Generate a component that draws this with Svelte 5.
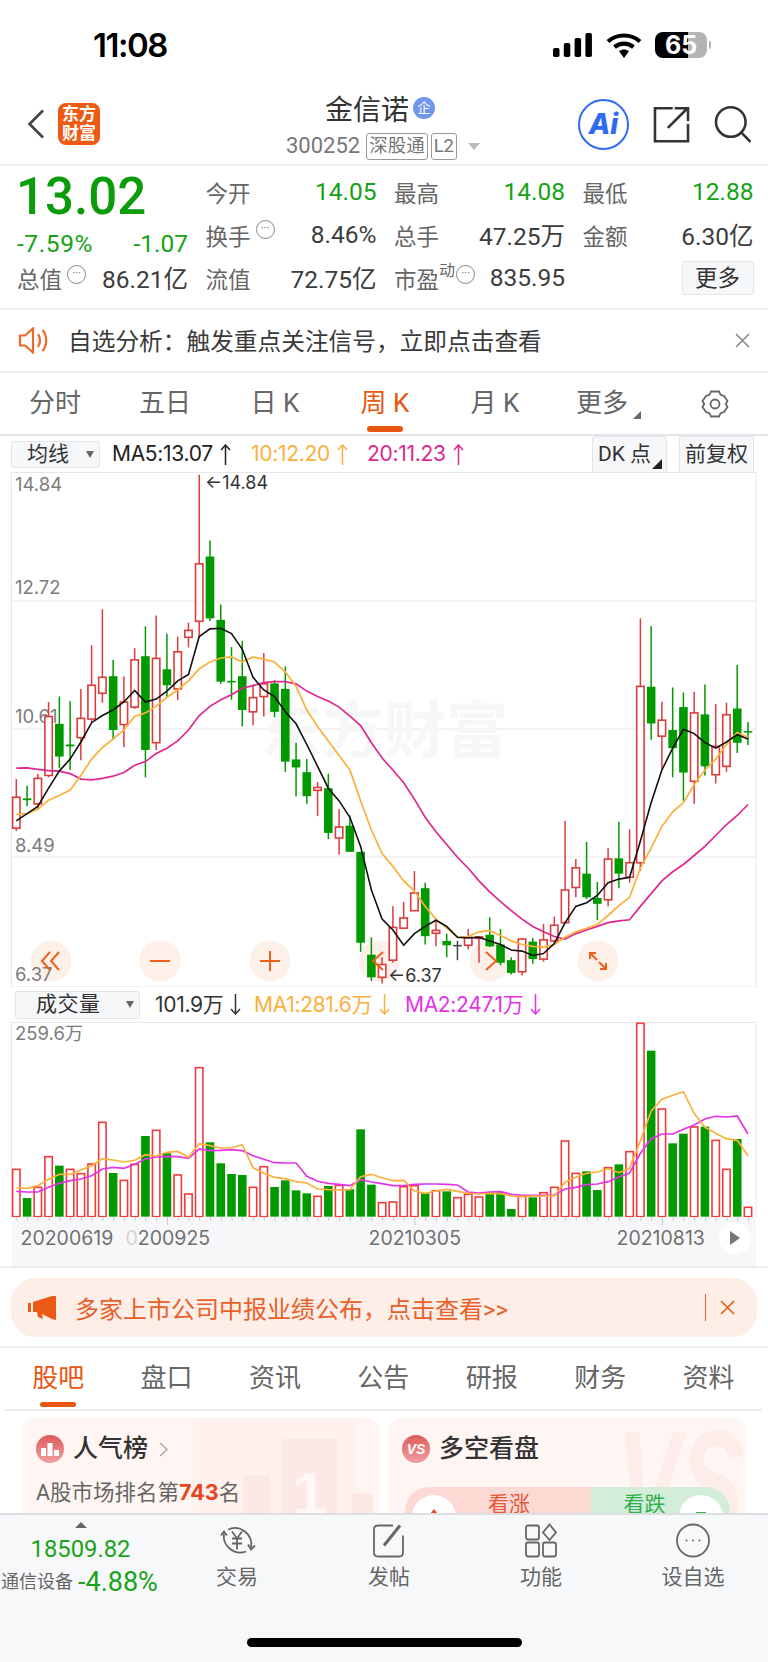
<script>
  // candles as [up, high, top, bottom, low], all y values read off the chart
  const candles = [
    [1,960,1010,1095,1103],[0,978,1013,1018,1035],[1,945,958,1028,1045],[1,748,788,950,955],[0,733,808,898,930],
    [0,745,865,870,935],[1,712,793,846,908],[1,592,702,795,805],[1,493,680,724,750],[0,632,677,825,850],
    [1,678,748,810,872],[1,600,632,762,767],[0,540,622,880,955],[1,510,628,860,880],[0,560,658,702,735],
    [1,568,610,712,742],[1,530,551,570,598],[1,123,368,526,570],[0,304,348,518,525],[0,480,522,692,698],
    [0,597,690,694,742],[0,580,677,770,815],[1,700,736,775,812],[1,613,698,733,788],[0,688,697,775,790],
    [0,650,712,912,940],[0,860,906,928,1008],[0,905,941,1007,1028],[1,968,983,991,1062],[0,945,985,1108,1125],
    [1,1042,1092,1122,1168],[0,1060,1088,1160,1160],[0,1160,1160,1410,1435],[0,1395,1443,1505,1515],[1,1450,1470,1505,1522],
    [1,1310,1368,1458,1465],[1,1298,1342,1370,1372],[1,1213,1273,1322,1322],[0,1245,1260,1392,1415],[1,1345,1376,1384,1420],
    [0,1385,1405,1417,1450],[2,1405,1416,1418,1458],[1,1372,1395,1417,1428],[1,1394,1394,1398,1465],[0,1340,1388,1420,1422],
    [0,1372,1415,1465,1472],[0,1450,1458,1493,1497],[1,1398,1400,1490,1500],[0,1397,1407,1455,1468],[1,1358,1402,1455,1462],
    [1,1338,1362,1405,1410],[1,1075,1265,1355,1355],[1,1180,1204,1258,1285],[0,1133,1220,1285,1290],[0,1243,1287,1303,1348],
    [1,1150,1180,1292,1310],[0,1077,1178,1220,1260],[1,1098,1190,1230,1245],[1,518,705,1190,1213],[0,540,706,807,852],
    [1,747,798,842,935],[0,708,825,875,955],[0,722,762,942,1020],[1,720,778,966,1028],[0,700,782,925,950],
    [1,754,870,948,972],[1,750,783,925,940],[0,646,766,860,888],[0,803,828,832,866]
  ];
  const ma5 = [1075,1055,1035,985,938,905,858,805,785,770,748,716,748,740,718,690,672,568,547,545,560,603,680,715,733,775,808,865,925,985,1020,1065,1145,1265,1345,1375,1417,1385,1365,1348,1365,1395,1397,1395,1405,1415,1430,1433,1445,1440,1412,1355,1310,1300,1280,1245,1235,1230,1130,1025,935,875,823,835,860,875,858,838,850];
  const ma10 = [1057,1055,1043,1018,1005,990,950,905,873,850,825,788,778,760,735,715,690,657,638,627,624,638,624,630,638,665,705,770,815,855,895,935,1020,1100,1165,1200,1240,1268,1310,1345,1370,1395,1393,1380,1377,1390,1405,1415,1420,1422,1415,1395,1380,1370,1360,1335,1308,1285,1205,1150,1090,1050,1025,975,935,905,865,832,845];
  const ma20 = [930,929,933,937,938,945,960,962,958,952,942,922,912,890,875,855,825,785,760,742,728,710,703,695,692,692,698,718,733,745,762,787,813,860,902,935,970,1015,1065,1105,1140,1175,1205,1240,1270,1297,1322,1345,1365,1380,1393,1400,1385,1375,1365,1355,1350,1347,1310,1275,1240,1215,1195,1170,1145,1115,1085,1060,1030];

  // volume: bar top per candle, up/down comes from this list
  const volume = [
    [1,538],[0,624],[1,592],[1,500],[0,527],[1,538],[1,551],[1,522],[1,397],[0,549],[1,571],[1,523],[0,438],[1,421],[0,490],[1,555],[1,612],[1,233],[0,457],[0,520],[0,552],[0,555],[1,592],[1,530],[0,591],[0,571],[0,601],[0,610],[1,619],[0,588],[1,586],[0,598],[0,418],[0,584],[1,638],[1,636],[1,590],[1,587],[0,610],[1,602],[0,604],[1,623],[1,613],[1,621],[0,606],[0,606],[0,657],[1,619],[0,622],[1,608],[1,592],[1,453],[1,550],[0,544],[0,600],[1,533],[0,523],[1,485],[1,100],[0,182],[1,357],[0,460],[0,431],[1,411],[0,410],[1,451],[1,538],[0,447],[1,652]
  ];
  const volMa1 = [594,595,587,568,553,553,540,527,506,510,516,511,494,498,487,484,502,461,467,474,474,464,533,550,562,566,575,579,597,599,600,599,560,553,563,572,571,603,610,603,598,604,610,612,610,611,618,620,618,618,617,577,562,550,546,536,548,535,452,364,328,316,305,370,412,430,446,451,497];
  const volMa2 = [604,606,606,592,580,572,567,557,537,532,535,523,507,501,499,500,505,477,482,481,479,482,497,508,518,519,519,559,574,580,583,587,569,576,581,587,587,583,582,582,583,585,606,609,606,605,613,616,616,616,615,597,592,584,582,575,561,549,490,447,432,432,418,405,387,379,381,378,432];

  const cx = (i) => 16.3 + i * 10.76;
  const py = (z) => z / 2.75 - 42;
  const vy = (z) => z / 3 - 32;
  const line = (arr, fy) => arr.map((z, i) => `${cx(i).toFixed(1)},${fy(z).toFixed(1)}`).join(' ');

  const grids = [129, 257, 385];
  const priceLabels = [['14.84', 19], ['12.72', 122], ['10.61', 251], ['8.49', 380], ['6.37', 509]];
  const colors = { 0: '#009a00', 1: '#dc3c3c', 2: '#444' };

  // zoom / scroll buttons along the bottom of the price chart
  const tools = [
    { x: 51, d: 'M10 2 2 11l8 9M19 2l-8 9 8 9' },
    { x: 160, d: 'M1 11H21' },
    { x: 270, d: 'M1 11H21M11 1V21' },
    { x: 379, d: 'M15 2 5 11l10 9' },
    { x: 490, d: 'M7 2l10 9-10 9' },
    { x: 598, d: 'M3 3 10 10M3 9V3H9M19 19 12 12M19 13V19H13' }
  ];

  const rows = [
    [['今开', '14.05', 'up'], ['最高', '14.08', 'up'], ['最低', '12.88', 'up']],
    [['换手', '8.46%', '', 'info'], ['总手', '47.25万', ''], ['金额', '6.30亿', '']]
  ];
  const chartTabs = ['分时', '五日', '日 K', '周 K', '月 K'];
  const newsTabs = ['股吧', '盘口', '资讯', '公告', '研报', '财务', '资料'];
</script>

{#snippet arrow(up)}
  <svg class="arrow" width="11" height="21" viewBox="0 0 11 21" fill="none" stroke="currentColor" stroke-width="1.500">
    {#if up}
      <path d="M5.500 1V21M1 6 5.500 1 10 6" />
    {:else}
      <path d="M5.500 0V20M1 15 5.500 20 10 15" />
    {/if}
  </svg>
{/snippet}

<div class="page">
  <div class="status">
    <span class="time">11:08</span>
    <div class="status-icons">
      <svg width="40" height="24" viewBox="0 0 40 24">
        <rect x="0" y="15" width="6.5" height="9" rx="1.8" />
        <rect x="10.8" y="10" width="6.5" height="14" rx="1.8" />
        <rect x="21.6" y="5" width="6.5" height="19" rx="1.8" />
        <rect x="32.4" y="0" width="6.5" height="24" rx="1.8" />
      </svg>
      <svg width="36" height="25" viewBox="0 0 36 25">
        <path d="M2 8.5C11 0.5 25 0.5 34 8.5" fill="none" stroke="#000" stroke-width="4.2" />
        <path d="M8.5 14C14 9.5 22 9.5 27.5 14" fill="none" stroke="#000" stroke-width="4.2" />
        <path d="M13 18.2C16 16 20 16 23 18.2L18 25Z" fill="#000" />
      </svg>
      <div class="battery"><span>65</span></div>
      <i class="nub"></i>
    </div>
  </div>

  <header class="top">
    <div class="top-left">
      <svg width="18" height="30" viewBox="0 0 18 30"><path d="M16 1.5 2.5 15 16 28.5" fill="none" stroke="#444" stroke-width="2.6" /></svg>
      <div class="logo">东方<br />财富</div>
    </div>
    <div class="top-mid">
      <div class="name">金信诺<span class="qi">企</span></div>
      <div class="code">
        300252<span class="tag">深股通</span><span class="tag l2">L2</span><i class="down"></i>
      </div>
    </div>
    <div class="top-right">
      <div class="ai">Ai</div>
      <svg width="37" height="37" viewBox="0 0 37 37">
        <path d="M20 2H2V35.5H35.5V18M15 22 35 2M22 2H35.5V15" fill="none" stroke="#333" stroke-width="2.6" />
      </svg>
      <svg width="38" height="38" viewBox="0 0 38 38">
        <circle cx="17" cy="17" r="15" fill="none" stroke="#333" stroke-width="2.6" />
        <path d="M28 28 37 37" stroke="#333" stroke-width="2.6" />
      </svg>
    </div>
  </header>

  <section class="stats">
    <div class="price">13.02</div>
    {#each rows[0] as r}
      <div class="cell"><span class="lb">{r[0]}</span><span class={r[2]}>{r[1]}</span></div>
    {/each}
    <div class="change"><span class="pct">-7.59%</span><span>-1.07</span></div>
    {#each rows[1] as r}
      <div class="cell">
        <span class="lb">{r[0]}{#if r[3]}<i class="dots up-dots">···</i>{/if}</span><span class="val">{r[1]}</span>
      </div>
    {/each}
    <div class="cell"><span class="lb">总值<i class="dots">···</i></span><span class="val">86.21亿</span></div>
    <div class="cell"><span class="lb">流值</span><span class="val">72.75亿</span></div>
    <div class="cell"><span class="lb">市盈<sup>动</sup><i class="dots tight">···</i></span><span class="val">835.95</span></div>
    <div class="cell end"><button class="more">更多</button></div>
  </section>

  <div class="notice">
    <svg width="31" height="27" viewBox="0 0 31 27" fill="none" stroke="#ef6a28" stroke-width="2.2">
      <path d="M2 8.5H7L15 1.5V25.5L7 18.5H2Z" />
      <path d="M20 7C22.5 11 22.5 16 20 20M24.5 3C29.5 9 29.5 18 24.5 24" />
    </svg>
    <span class="notice-text">自选分析：触发重点关注信号，立即点击查看</span>
    <svg width="15" height="15" viewBox="0 0 15 15"><path d="M1 1 14 14M14 1 1 14" stroke="#888" stroke-width="1.6" /></svg>
  </div>

  <nav class="chart-tabs">
    {#each chartTabs as t}
      <div class="ctab" class:on={t === '周 K'}>{t}</div>
    {/each}
    <div class="ctab more-tab">更多<i class="corner"></i></div>
    <div class="ctab">
      <svg width="30" height="30" viewBox="0 0 30 30" fill="none" stroke="#666" stroke-width="1.8">
        <path d="M11 2.5H19L20.5 5.8 24 7 27.5 12 25.8 15 27.5 18 24 23 20.5 24.2 19 27.5H11L9.500 24.200 6 23 2.500 18 4.200 15 2.500 12 6 7 9.500 5.800Z" />
        <circle cx="15" cy="15" r="4.500" />
      </svg>
    </div>
  </nav>

  <div class="legend">
    <div class="pick">均线<i class="tri"></i></div>
    <span class="ma w1 k">MA5:13.07{@render arrow(true)}</span>
    <span class="ma w2 o">10:12.20{@render arrow(true)}</span>
    <span class="ma w3 p">20:11.23{@render arrow(true)}</span>
    <div class="opt dk">DK 点<i class="corner dark"></i></div>
    <div class="opt">前复权</div>
  </div>

  <svg class="plot" width="768" height="515">
    <rect x="11.500" y="0.500" width="744.500" height="514.500" fill="#fff" stroke="#e6e7ec" />
    {#each grids as g}
      <line x1="12" x2="756" y1={g} y2={g} stroke="#e9eaf0" stroke-width="1.2" />
    {/each}
    <text class="wm" x="384" y="281" text-anchor="middle">东方财富</text>
    {#each tools as t}
      <circle cx={t.x} cy="489" r="20.500" fill="#fdf0e9" />
    {/each}
    {#each priceLabels as l}
      <text class="axis" x="15" y={l[1]}>{l[0]}</text>
    {/each}
    {#each candles as c, i}
      {#if c[0] === 1}
        <line x1={cx(i)} x2={cx(i)} y1={py(c[1])} y2={py(c[2])} stroke={colors[1]} stroke-width="1.500" />
        <line x1={cx(i)} x2={cx(i)} y1={py(c[3])} y2={py(c[4])} stroke={colors[1]} stroke-width="1.500" />
        <rect x={cx(i) - 3.700} y={py(c[2])} width="7.400" height={py(c[3]) - py(c[2])} fill="#fff" stroke={colors[1]} stroke-width="1.600" />
      {:else}
        <line x1={cx(i)} x2={cx(i)} y1={py(c[1])} y2={py(c[4])} stroke={colors[c[0]]} stroke-width="1.500" />
        <rect x={cx(i) - 4.300} y={py(c[2])} width="8.600" height={Math.max(py(c[3]) - py(c[2]), 1.500)} fill={colors[c[0]]} />
      {/if}
    {/each}
    <polyline points={line(ma20, py)} fill="none" stroke="#e0278f" stroke-width="1.700" />
    <polyline points={line(ma10, py)} fill="none" stroke="#fbb03b" stroke-width="1.700" />
    <polyline points={line(ma5, py)} fill="none" stroke="#111" stroke-width="1.600" />
    <text class="mark" x="205" y="17">←14.84</text>
    <text class="mark" x="388" y="510">←6.37</text>
    {#each tools as t}
      <path class="tool" d={t.d} transform="translate({t.x - 11} 478)" />
    {/each}
  </svg>

  <div class="legend vol">
    <div class="pick wide">成交量<i class="tri"></i></div>
    <span class="ma v1">101.9万{@render arrow(false)}</span>
    <span class="ma v2 o">MA1:281.6万{@render arrow(false)}</span>
    <span class="ma v3 m">MA2:247.1万{@render arrow(false)}</span>
  </div>

  <svg class="volchart" width="768" height="195">
    <rect x="11.500" y="0.500" width="744.500" height="195" fill="#fff" stroke="#e6e7ec" />
    <text class="axis" x="15" y="18">259.6万</text>
    {#each volume as v, i}
      {#if v[0]}
        <rect x={cx(i) - 3.700} y={vy(v[1])} width="7.400" height={vy(680) - vy(v[1])} fill="#fff" stroke="#f23a3a" stroke-width="1.600" />
      {:else}
        <rect x={cx(i) - 4.300} y={vy(v[1])} width="8.600" height={vy(680) - vy(v[1])} fill="#009a00" />
      {/if}
    {/each}
    <polyline points={line(volMa2, vy)} fill="none" stroke="#e334e8" stroke-width="1.700" />
    <polyline points={line(volMa1, vy)} fill="none" stroke="#fbb03b" stroke-width="1.700" />
  </svg>

  <div class="axisbar">
    <svg width="745" height="49" viewBox="11.500 0 745 49">
      {#each candles as c, i}
        <line x1={cx(i)} x2={cx(i)} y1="0" y2={i === 14 || i === 37 || i === 60 ? 8 : 4} stroke="#c8c9cf" />
      {/each}
      <text class="date" x="20" y="28">20200619</text>
      <text class="date" x="125" y="28"><tspan opacity="0.25">0</tspan>200925</text>
      <text class="date" x="368" y="28">20210305</text>
      <text class="date" x="616" y="28">20210813</text>
    </svg>
    <div class="play"><i></i></div>
  </div>

  <div class="promo-wrap">
    <div class="promo">
      <svg width="29" height="24" viewBox="0 0 29 24">
        <path d="M0 7H3V16H0ZM5 6 24 0H28V24L24 23 14 18 15 23 10 21 9 16 5 16Z" fill="#ea5a14" />
      </svg>
      <span class="promo-text">多家上市公司中报业绩公布，点击查看&gt;&gt;</span>
      <i class="vbar"></i>
      <svg width="15" height="15" viewBox="0 0 15 15"><path d="M1 1 14 14M14 1 1 14" stroke="#ea5a14" stroke-width="1.600" /></svg>
    </div>
  </div>

  <nav class="news-tabs">
    {#each newsTabs as t, i}
      <div class="ntab" class:on={i === 0}>{t}</div>
    {/each}
  </nav>

  <div class="cards">
    <div class="card">
      <div class="ghost-back"></div>
      <div class="ghost-bars"><b></b><b>1</b><b></b></div>
      <div class="card-title">
        <div class="badge">
          <svg width="18" height="14" viewBox="0 0 18 14" fill="#fff"><rect x="0" y="6" width="5" height="8" /><rect x="6.500" y="1" width="5" height="13" /><rect x="13" y="8" width="5" height="6" /></svg>
        </div>
        人气榜
        <svg class="chev" width="9" height="15" viewBox="0 0 9 15"><path d="M1 1 8 7.500 1 14" fill="none" stroke="#aaa" stroke-width="1.500" /></svg>
      </div>
      <div class="rank">A股市场排名第<b>743</b>名</div>
    </div>
    <div class="card">
      <div class="ghost-vs">VS</div>
      <div class="card-title"><div class="badge vs">VS</div>多空看盘</div>
      <div class="vote">
        <div class="vote-up"><i class="knob"><i class="mini-up"></i></i><span>看涨</span></div>
        <div class="vote-down"><span>看跌</span><i class="knob"><i class="mini-down"></i></i></div>
      </div>
    </div>
  </div>

  <footer class="foot">
    <div class="index">
      <i class="caret"></i>
      <div class="idx-num">18509.82</div>
      <div class="idx-line"><span>通信设备</span><b>-4.88%</b></div>
    </div>
    <div class="act">
      <svg width="38" height="36" viewBox="0 0 38 36" fill="none" stroke="#666" stroke-width="1.800">
        <path d="M10 7A16.500 16.500 0 0 1 33 25M28 29A16.500 16.500 0 0 1 6 11" />
        <path d="M3 13 6 9 9 13M30 22 33 27 37 23" />
        <path d="M14 9 19 16 24 9M19 16V27M14 16H24M14 21H24" />
      </svg>
      <span>交易</span>
    </div>
    <div class="act">
      <svg width="34" height="36" viewBox="0 0 34 36" fill="none" stroke="#666" stroke-width="1.800">
        <path d="M21 3H6Q2 3 2 7V30Q2 34 6 34H27Q31 34 31 30V13" />
        <path d="M12 23 28 3" stroke-width="3" />
      </svg>
      <span>发帖</span>
    </div>
    <div class="act">
      <svg width="32" height="34" viewBox="0 0 32 34" fill="none" stroke="#666" stroke-width="1.800">
        <rect x="1" y="2" width="13" height="14" rx="2" />
        <rect x="1" y="19" width="13" height="14" rx="2" />
        <rect x="18" y="19" width="13" height="14" rx="2" />
        <path d="M24.500 1 31 9 24.500 16.500 18 9Z" />
      </svg>
      <span>功能</span>
    </div>
    <div class="act">
      <svg width="34" height="34" viewBox="0 0 34 34" fill="none" stroke="#666" stroke-width="1.800">
        <circle cx="17" cy="17" r="16" />
        <circle cx="10.500" cy="17" r="1" fill="#666" stroke="none" />
        <circle cx="17" cy="17" r="1" fill="#666" stroke="none" />
        <circle cx="23.500" cy="17" r="1" fill="#666" stroke="none" />
      </svg>
      <span>设自选</span>
    </div>
    <i class="home"></i>
  </footer>
</div>

<style>
  :global(body) {
    margin: 0;
    background: #fff;
  }
  .page {
    width: 768px;
    height: 1662px;
    display: flex;
    flex-direction: column;
    overflow: hidden;
    position: relative;
    color: #333;
    font-family: Roboto, "Noto Sans CJK SC", sans-serif;
  }
  i {
    font-style: normal;
  }

  .status {
    height: 88px;
    flex: none;
    display: flex;
    align-items: flex-start;
    justify-content: space-between;
    padding: 0 57px 0 93px;
    box-sizing: border-box;
  }
  .time {
    margin-top: 27px;
    font: 600 33px/36px Inter, sans-serif;
    color: #000;
    letter-spacing: -1.500px;
  }
  .status-icons {
    display: flex;
    align-items: center;
    gap: 13px;
    margin-top: 32px;
  }
  .status-icons svg {
    fill: #000;
  }
  .battery {
    width: 52px;
    height: 26px;
    border-radius: 8px;
    background: linear-gradient(90deg, #000 63%, #b4b4b4 63%);
    color: #fff;
    font: 700 25px/26px Inter, sans-serif;
    text-align: center;
  }
  .nub {
    width: 2px;
    height: 8px;
    background: #b4b4b4;
    margin-left: -11px;
    border-radius: 0 2px 2px 0;
  }

  .top {
    height: 78px;
    flex: none;
    display: flex;
    align-items: flex-start;
    box-sizing: border-box;
    border-bottom: 2px solid #ecedf0;
  }
  .top-left,
  .top-right {
    width: 180px;
    flex: none;
    display: flex;
    align-items: center;
    height: 72px;
  }
  .top-left {
    padding-left: 27px;
    gap: 13px;
    box-sizing: border-box;
  }
  .logo {
    width: 42px;
    height: 42px;
    border-radius: 8px;
    background: #ef5a13;
    color: #fff;
    font-weight: 700;
    font-size: 17px;
    line-height: 19px;
    text-align: center;
    padding-top: 2px;
    box-sizing: border-box;
  }
  .top-mid {
    flex: 1;
    text-align: center;
  }
  .name {
    font-size: 28px;
    line-height: 40px;
    margin-top: 3px;
    display: flex;
    justify-content: center;
    align-items: center;
    gap: 4px;
    margin-left: -8px;
  }
  .qi {
    width: 22px;
    height: 22px;
    border-radius: 50%;
    background: #6f97ec;
    color: #fff;
    font-size: 13px;
    line-height: 22px;
    margin-top: -6px;
  }
  .code {
    display: flex;
    justify-content: center;
    align-items: center;
    color: #777;
    font-size: 22px;
    line-height: 28px;
    margin-left: -2px;
    margin-top: 1px;
  }
  .tag {
    border: 1px solid #999;
    border-radius: 3px;
    font-size: 18.500px;
    line-height: 25px;
    padding: 0 2px;
    margin-left: 6px;
  }
  .l2 {
    margin-left: 3px;
  }
  .down {
    width: 0;
    height: 0;
    border: 6px solid transparent;
    border-top: 7px solid #bbb;
    border-bottom: 0;
    margin-left: 11px;
  }
  .top-right {
    justify-content: flex-end;
    gap: 24px;
    padding-right: 17px;
    box-sizing: border-box;
    width: 190px;
    margin-left: -10px;
  }
  .ai {
    width: 51px;
    height: 51px;
    box-sizing: border-box;
    flex: none;
    border: 2.600px solid #2f6bf2;
    border-radius: 50%;
    color: #2f6bf2;
    font: italic 800 28px/46px Inter, sans-serif;
    text-align: center;
  }

  .stats {
    height: 144px;
    flex: none;
    box-sizing: border-box;
    padding: 4px 15px 0 17px;
    display: grid;
    grid-template-columns: 171px 171px 171px 171px;
    grid-auto-rows: 43px;
    column-gap: 17.500px;
    border-bottom: 2px solid #ecedf0;
    font-size: 24.500px;
  }
  .price {
    font-size: 51px;
    font-weight: 500;
    line-height: 43px;
    color: #0a9c0a;
    padding-top: 5px;
    margin-left: -1px;
  }
  .change {
    display: flex;
    justify-content: space-between;
    color: #14a314;
    font-size: 24.500px;
    line-height: 43px;
    padding-top: 9px;
  }
  .pct {
    letter-spacing: 0.600px;
  }
  .cell {
    display: flex;
    justify-content: space-between;
    align-items: center;
    white-space: nowrap;
  }
  .lb {
    color: #666;
    font-size: 22.500px;
    display: flex;
    align-items: center;
  }
  .up {
    color: #14a314;
  }
  .val {
    color: #3c3c3c;
  }
  .dots {
    width: 19px;
    height: 19px;
    box-sizing: border-box;
    border: 1px solid #888;
    border-radius: 50%;
    color: #666;
    font-size: 11px;
    line-height: 15px;
    text-align: center;
    margin: -6px 0 0 5px;
  }
  .up-dots {
    margin-top: -10px;
  }
  .tight {
    margin-left: 1px;
  }
  sup {
    font-size: 16px;
    line-height: 16px;
    margin-top: -14px;
  }
  .end {
    justify-content: flex-end;
  }
  .more {
    width: 72px;
    height: 34px;
    border: 1px solid #e4e6ea;
    border-radius: 3px;
    background: #f6f7f9;
    color: #333;
    font-family: inherit;
    font-size: 22.500px;
    line-height: 30px;
    padding: 0;
    margin-top: 1px;
  }

  .notice {
    height: 63px;
    flex: none;
    box-sizing: border-box;
    border-bottom: 2px solid #ecedf0;
    display: flex;
    align-items: center;
    padding: 0 18px;
  }
  .notice-text {
    flex: 1;
    margin-left: 19px;
    margin-top: -2px;
    font-size: 23.700px;
    color: #3a3a3a;
  }

  .chart-tabs {
    height: 63px;
    flex: none;
    box-sizing: border-box;
    border-bottom: 2px solid #e4e5e9;
    display: flex;
  }
  .ctab {
    width: 110px;
    flex: none;
    font-size: 26px;
    line-height: 61px;
    text-align: center;
    color: #666;
    position: relative;
    display: flex;
    align-items: center;
    justify-content: center;
  }
  .ctab.on {
    color: #e8560f;
  }
  .ctab.on::after {
    content: "";
    position: absolute;
    left: 37px;
    width: 36px;
    bottom: 2px;
    height: 6px;
    border-radius: 3px;
    background: #e8560f;
  }
  .more-tab {
    margin-left: -3px;
    margin-right: 3px;
  }
  .corner {
    position: absolute;
    right: 16px;
    bottom: 15px;
    width: 0;
    height: 0;
    border-left: 8px solid transparent;
    border-bottom: 8px solid #666;
  }

  .legend {
    height: 36px;
    flex: none;
    display: flex;
    align-items: center;
    padding-left: 11px;
    box-sizing: border-box;
  }
  .pick {
    width: 89px;
    height: 27px;
    box-sizing: border-box;
    border: 1px solid #e3e5ea;
    border-radius: 3px;
    background: #f6f7f9;
    font-size: 21px;
    line-height: 25px;
    padding-left: 15px;
    position: relative;
    flex: none;
    margin-top: 1px;
  }
  .pick.wide {
    width: 125px;
    margin-left: 4px;
    padding-left: 20px;
    letter-spacing: 0.500px;
    height: 28px;
  }
  .tri {
    position: absolute;
    right: 5px;
    top: 9px;
    width: 0;
    height: 0;
    border: 4px solid transparent;
    border-top: 7px solid #666;
    border-bottom: 0;
  }
  .ma {
    font: 21px/36px Inter, "Noto Sans CJK SC", sans-serif;
    white-space: nowrap;
    flex: none;
    letter-spacing: -0.300px;
    display: flex;
    align-items: center;
  }
  .arrow {
    margin-left: 7px;
    flex: none;
  }
  .w1 {
    margin-left: 12px;
    width: 139px;
  }
  .w2 {
    width: 116px;
  }
  .w3 {
    width: 225px;
  }
  .k {
    color: #222;
  }
  .o {
    color: #fbb03b;
  }
  .p {
    color: #e0278f;
  }
  .m {
    color: #e334e8;
  }
  .opt {
    width: 75px;
    height: 36px;
    box-sizing: border-box;
    flex: none;
    border: 1px solid #e3e5ea;
    border-bottom: 0;
    border-radius: 3px 3px 0 0;
    background: #f6f7f9;
    font-size: 21px;
    line-height: 34px;
    text-align: center;
    margin-left: 12px;
    position: relative;
    color: #333;
  }
  .dk {
    margin-left: 0;
    padding-right: 10px;
    white-space: nowrap;
  }
  .corner.dark {
    right: 4px;
    bottom: 3px;
    border-left-width: 10px;
    border-bottom: 10px solid #222;
  }

  .plot,
  .volchart {
    display: block;
    flex: none;
  }
  .wm {
    font-size: 62px;
    font-weight: 700;
    fill: #f7f7f7;
  }
  .axis {
    font: 18.500px Inter, "Noto Sans CJK SC", sans-serif;
    fill: #7c7c7c;
  }
  .mark {
    font: 400 18px Inter, sans-serif;
    fill: #333;
  }
  .tool {
    fill: none;
    stroke: #ee5f18;
    stroke-width: 2;
  }

  .vol {
    height: 35px;
  }
  .v1 {
    margin-left: 15px;
    width: 99px;
  }
  .v2 {
    width: 151px;
  }
  .v3 {
    width: 160px;
  }

  .axisbar {
    height: 49px;
    flex: none;
    margin: 0 12px 0 11.500px;
    background: #f7f7fa;
    position: relative;
  }
  .date {
    font: 19.500px Inter, sans-serif;
    fill: #707070;
  }
  .play {
    position: absolute;
    right: 5px;
    top: 5px;
    width: 32px;
    height: 32px;
    border-radius: 50%;
    background: #fff;
    display: flex;
    align-items: center;
    justify-content: center;
  }
  .play i {
    width: 0;
    height: 0;
    border: 7px solid transparent;
    border-left: 10px solid #777;
    border-right: 0;
  }

  .promo-wrap {
    height: 82px;
    flex: none;
    box-sizing: border-box;
    border-top: 2px solid #ecedf0;
    border-bottom: 2px solid #ecedf0;
    padding: 10px 11px 0;
  }
  .promo {
    height: 59px;
    border-radius: 24px;
    background: #fdeee8;
    display: flex;
    align-items: center;
    padding: 0 22px 0 17px;
    color: #e8602a;
  }
  .promo-text {
    flex: 1;
    margin-left: 18px;
    font-size: 24px;
  }
  .vbar {
    width: 1px;
    height: 27px;
    background: #e8602a;
    margin-right: 14px;
  }

  .news-tabs {
    height: 63px;
    flex: none;
    box-sizing: border-box;
    margin: 0 6px 0 4px;
    border-bottom: 2px solid #ecedf0;
    display: flex;
  }
  .ntab {
    width: 108.400px;
    flex: none;
    text-align: center;
    font-size: 26px;
    line-height: 61px;
    color: #666;
    position: relative;
  }
  .ntab.on {
    color: #e8560f;
  }
  .ntab.on::after {
    content: "";
    position: absolute;
    left: 36px;
    width: 36px;
    bottom: 2px;
    height: 5px;
    border-radius: 3px;
    background: #e8560f;
  }

  .cards {
    flex: 1;
    min-height: 0;
    overflow: hidden;
    display: flex;
    gap: 8px;
    padding: 7px 22px 0;
  }
  .card {
    width: 358px;
    height: 200px;
    flex: none;
    box-sizing: border-box;
    border-radius: 14px;
    background: #fff6f3;
    padding: 16px 14px;
    position: relative;
    overflow: hidden;
  }
  .card-title {
    display: flex;
    align-items: center;
    font-size: 25px;
    font-weight: 500;
    line-height: 30px;
    color: #333;
    position: relative;
    gap: 9px;
  }
  .badge {
    width: 28px;
    height: 28px;
    border-radius: 50%;
    background: linear-gradient(#dd5a5a, #f0a0a0);
    display: flex;
    align-items: center;
    justify-content: center;
    color: #fff;
    font: italic 700 14px/28px "Liberation Sans", sans-serif;
  }
  .chev {
    margin-left: 2px;
  }
  .rank {
    position: relative;
    margin-top: 13px;
    font-size: 21.500px;
    line-height: 30px;
    color: #666;
  }
  .rank b {
    color: #e8461e;
    font-weight: 700;
    font-family: Inter, sans-serif;
  }
  .ghost-back {
    position: absolute;
    left: 171px;
    top: 0;
    bottom: 0;
    width: 165px;
    background: #fff1ee;
  }
  .ghost-bars {
    position: absolute;
    left: 221px;
    bottom: 0;
    top: 0;
    display: flex;
    align-items: flex-end;
    gap: 12px;
  }
  .ghost-bars b {
    width: 27px;
    height: 143px;
    background: #fce9e6;
  }
  .ghost-bars b:nth-child(2) {
    width: 55px;
    height: 179px;
    color: #fff8f6;
    font: 700 62px/110px "Liberation Sans", sans-serif;
    text-align: center;
  }
  .ghost-bars b:nth-child(3) {
    width: 21px;
    height: 125px;
    margin-left: 3px;
  }
  .ghost-vs {
    position: absolute;
    left: 229px;
    top: -9px;
    font: italic 700 95px/95px "Liberation Sans", sans-serif;
    color: #fdecea;
    transform: scaleY(1.600);
    transform-origin: top left;
  }
  .vote {
    position: relative;
    display: flex;
    height: 60px;
    margin-top: 23px;
    margin-left: 3px;
    width: 325px;
    border-radius: 24px;
    overflow: hidden;
    gap: 2px;
    font-size: 21px;
    line-height: 34px;
  }
  .vote-up {
    flex: 1;
    background: #fdd9d4;
    color: #e8563a;
    padding-left: 83px;
    position: relative;
    clip-path: polygon(0 0, 100% 0, 97% 100%, 0 100%);
  }
  .vote-down {
    flex: 1;
    background: #d2eed8;
    color: #35ae52;
    padding-left: 33px;
    position: relative;
    margin-left: -6px;
  }
  .knob {
    position: absolute;
    top: 8px;
    width: 44px;
    height: 44px;
    border-radius: 50%;
    background: #fff;
  }
  .vote-up .knob {
    left: 7px;
  }
  .vote-down .knob {
    right: 7px;
  }
  .mini-up {
    position: absolute;
    left: 18px;
    top: 14px;
    width: 0;
    height: 0;
    border: 4px solid transparent;
    border-bottom: 5px solid #e8461e;
    border-top: 0;
  }
  .mini-down {
    position: absolute;
    left: 17px;
    top: 17px;
    width: 10px;
    height: 2px;
    background: #35ae52;
  }

  .foot {
    height: 149px;
    flex: none;
    box-sizing: border-box;
    border-top: 2px solid #dcdee3;
    background: #f7f8fa;
    display: grid;
    grid-template-columns: 161px repeat(4, 152px);
    position: relative;
  }
  .index {
    position: relative;
    text-align: center;
  }
  .caret {
    position: absolute;
    left: 75px;
    top: 7px;
    width: 0;
    height: 0;
    border: 6px solid transparent;
    border-bottom: 6px solid #666;
    border-top: 0;
  }
  .idx-num {
    margin-top: 19px;
    font-size: 23.800px;
    line-height: 30px;
    color: #1aa31a;
  }
  .idx-line {
    display: flex;
    align-items: center;
    white-space: nowrap;
    margin-top: 3px;
    font-size: 18px;
    padding-left: 1px;
    gap: 5px;
    color: #666;
    line-height: 30px;
  }
  .idx-line b {
    font-size: 27px;
    font-weight: 400;
    color: #1aa31a;
  }
  .act {
    display: flex;
    flex-direction: column;
    align-items: center;
    padding-top: 7px;
    font-size: 21px;
    color: #666;
    line-height: 28px;
  }
  .act svg {
    height: 37px;
    margin-bottom: 4px;
  }
  .home {
    position: absolute;
    left: 247px;
    bottom: 15px;
    width: 275px;
    height: 9px;
    border-radius: 5px;
    background: #000;
  }
</style>
